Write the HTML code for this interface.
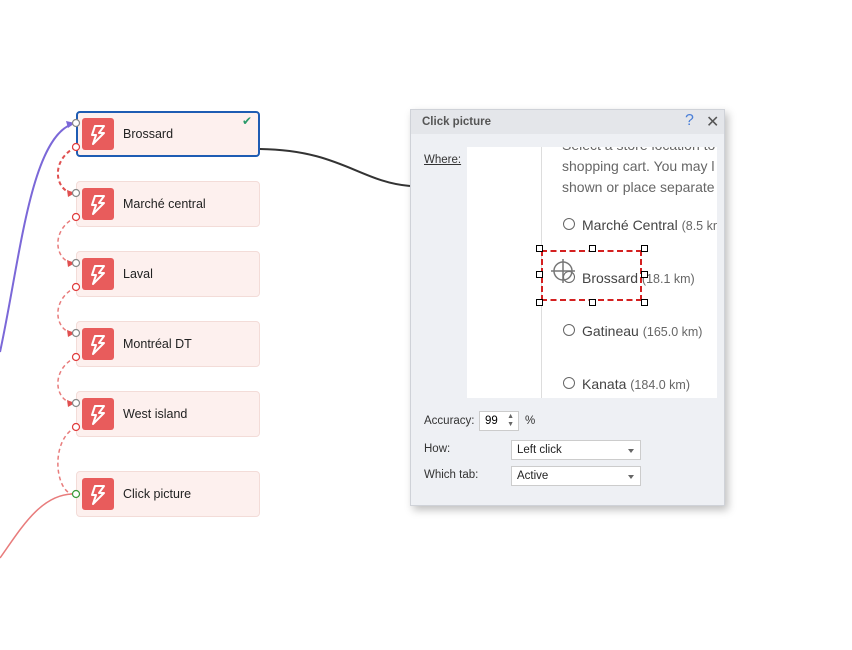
<!DOCTYPE html>
<html><head><style>
body{margin:0;width:852px;height:650px;background:#fff;position:relative;overflow:hidden;font-family:"Liberation Sans",Arial,sans-serif;}
.n{position:absolute;left:76px;width:184px;height:46px;background:#fdf0ee;border:1px solid #f3dcd8;border-radius:4px;box-sizing:border-box;}
.n .ic{position:absolute;left:5px;top:6px;width:32px;height:32px;background:#e85c5c;border-radius:3px;}
.n .ic svg{position:absolute;left:0;top:0}
.n .t{position:absolute;left:46px;top:15px;font-size:12.5px;color:#222;}
.sel{border:2px solid #1e5cb3;}
.sel .ic{left:4px;top:5px}.sel .t{left:45px;top:14px}
.ab{position:absolute;font-size:11.5px;color:#333}
.dlg{position:absolute;left:410px;top:109px;width:315px;height:397px;background:#eef0f4;border:1px solid #cfd2d8;box-shadow:3px 4px 8px rgba(0,0,0,.25);box-sizing:border-box;}
.sb{position:absolute;left:100px;width:130px;height:20px;background:#fff;border:1px solid #ccc;box-sizing:border-box;font-size:11.5px;padding:3px 5px;color:#222}
.sb:after{content:"";position:absolute;right:6px;top:8px;border:3px solid transparent;border-top:4px solid #666}
.h{position:absolute;width:5px;height:5px;border:1px solid #000;background:#fff}
.r{position:absolute;left:96px;width:12px;height:12px;border:1px solid #666;border-radius:50%;box-sizing:border-box}
.rt{position:absolute;left:115px;font-size:14px;color:#444;white-space:nowrap}
.rt span{font-size:12.5px;color:#666}
</style></head><body>
<svg width="852" height="650" style="position:absolute;left:0;top:0">
<path d="M0 352 C20 260 30 140 72 124" stroke="#7b68d8" stroke-width="2" fill="none"/>
<path d="M66 121 L75 123 L68 128Z" fill="#7b68d8"/>
<path d="M0 558 C20 530 40 495 72 494" stroke="#e87c7c" stroke-width="1.5" fill="none"/>
<path d="M260 149 C340 150 360 182 410 186" stroke="#333" stroke-width="2" fill="none"/>
<g stroke="#e87c7c" stroke-width="1.5" fill="none" stroke-dasharray="4,3">
<path d="M76 147 C50 160 55 190 72 193" stroke="#e05050" stroke-width="2"/>
<path d="M76 217 C50 230 55 260 72 263"/>
<path d="M76 287 C50 300 55 330 72 333"/>
<path d="M76 357 C50 370 55 400 72 403"/>
<path d="M76 427 C50 440 55 490 72 494"/>
</g>
<g fill="#e05050"><path d="M67 190 L75 193 L68 197Z"/><path d="M67 260 L75 263 L68 267Z"/><path d="M67 330 L75 333 L68 337Z"/><path d="M67 400 L75 403 L68 407Z"/></g>
</svg>
<div class="n sel" style="top:111px"><div class="ic"><svg width="32" height="32"><path d="M13 8H22L17 15H22L11 26L14 17H10Z" fill="none" stroke="#fff" stroke-width="2" stroke-linejoin="round"/></svg></div><div class="t">Brossard</div><div style="position:absolute;right:6px;top:1px;color:#2a9a6a;font-size:12px">✔</div></div>
<div class="n" style="top:181px"><div class="ic"><svg width="32" height="32"><path d="M13 8H22L17 15H22L11 26L14 17H10Z" fill="none" stroke="#fff" stroke-width="2" stroke-linejoin="round"/></svg></div><div class="t">Marché central</div></div>
<div class="n" style="top:251px"><div class="ic"><svg width="32" height="32"><path d="M13 8H22L17 15H22L11 26L14 17H10Z" fill="none" stroke="#fff" stroke-width="2" stroke-linejoin="round"/></svg></div><div class="t">Laval</div></div>
<div class="n" style="top:321px"><div class="ic"><svg width="32" height="32"><path d="M13 8H22L17 15H22L11 26L14 17H10Z" fill="none" stroke="#fff" stroke-width="2" stroke-linejoin="round"/></svg></div><div class="t">Montréal DT</div></div>
<div class="n" style="top:391px"><div class="ic"><svg width="32" height="32"><path d="M13 8H22L17 15H22L11 26L14 17H10Z" fill="none" stroke="#fff" stroke-width="2" stroke-linejoin="round"/></svg></div><div class="t">West island</div></div>
<div class="n" style="top:471px"><div class="ic"><svg width="32" height="32"><path d="M13 8H22L17 15H22L11 26L14 17H10Z" fill="none" stroke="#fff" stroke-width="2" stroke-linejoin="round"/></svg></div><div class="t">Click picture</div></div>
<svg width="852" height="650" style="position:absolute;left:0;top:0">
<g fill="#fff" stroke-width="1.2">
<circle cx="76" cy="123" r="3.5" stroke="#888"/><circle cx="76" cy="147" r="3.5" stroke="#e03c3c"/>
<circle cx="76" cy="193" r="3.5" stroke="#888"/><circle cx="76" cy="217" r="3.5" stroke="#e03c3c"/>
<circle cx="76" cy="263" r="3.5" stroke="#888"/><circle cx="76" cy="287" r="3.5" stroke="#e03c3c"/>
<circle cx="76" cy="333" r="3.5" stroke="#888"/><circle cx="76" cy="357" r="3.5" stroke="#e03c3c"/>
<circle cx="76" cy="403" r="3.5" stroke="#888"/><circle cx="76" cy="427" r="3.5" stroke="#e03c3c"/>
<circle cx="76" cy="494" r="3.5" stroke="#3a9a3a"/>
</g>
</svg>
<div class="dlg">
<div style="position:absolute;left:0;top:0;right:0;height:24px;background:#e4e6ea"></div>
<div style="position:absolute;left:11px;top:6px;font-size:11.5px;font-weight:bold;color:#555">Click picture</div>
<div style="position:absolute;left:274px;top:2px;font-size:16px;color:#4a7fd8">?</div>
<div style="position:absolute;left:295px;top:2px;font-size:16px;color:#555">✕</div>
<div style="position:absolute;left:13px;top:44px;font-size:11.5px;color:#333;text-decoration:underline">Where:</div>
<div style="position:absolute;left:56px;top:37px;width:250px;height:251px;background:#fff;overflow:hidden">
<div style="position:absolute;left:74px;top:0;width:1px;height:251px;background:#ddd"></div>
<div style="position:absolute;left:95px;top:-12px;font-size:14px;color:#666;line-height:21px;white-space:nowrap">Select a store location to<br>shopping cart. You may l<br>shown or place separate</div>
<div class="r" style="top:71px"></div><div class="rt" style="top:70px">Marché Central <span>(8.5 km</span></div>
<div class="r" style="top:124px"></div><div class="rt" style="top:123px">Brossard <span>(18.1 km)</span></div>
<div class="r" style="top:177px"></div><div class="rt" style="top:176px">Gatineau <span>(165.0 km)</span></div>
<div class="r" style="top:230px"></div><div class="rt" style="top:229px">Kanata <span>(184.0 km)</span></div>
</div>
<div class="ab" style="left:13px;top:305px">Accuracy:</div>
<div style="position:absolute;left:68px;top:301px;width:40px;height:20px;background:#fff;border:1px solid #ccc;box-sizing:border-box;font-size:11.5px;padding:3px 5px">99<span style="position:absolute;right:4px;top:1px;font-size:7px;line-height:8px;color:#666">▲<br>▼</span></div>
<div class="ab" style="left:114px;top:305px">%</div>
<div class="ab" style="left:13px;top:333px">How:</div>
<div class="sb" style="top:330px">Left click</div>
<div class="ab" style="left:13px;top:359px">Which tab:</div>
<div class="sb" style="top:356px">Active</div>
</div>
<div style="position:absolute;left:541px;top:250px;width:101px;height:51px;border:2px dashed #d42020;box-sizing:border-box"></div>
<div class="h" style="left:536px;top:245px"></div><div class="h" style="left:589px;top:245px"></div><div class="h" style="left:641px;top:245px"></div>
<div class="h" style="left:536px;top:271px"></div><div class="h" style="left:641px;top:271px"></div>
<div class="h" style="left:536px;top:299px"></div><div class="h" style="left:589px;top:299px"></div><div class="h" style="left:641px;top:299px"></div>
<svg width="852" height="650" style="position:absolute;left:0;top:0"><g stroke="#777" stroke-width="1.5" fill="none"><circle cx="563" cy="271" r="9"/><path d="M551 271H575M563 259V283"/></g></svg>
</body></html>
